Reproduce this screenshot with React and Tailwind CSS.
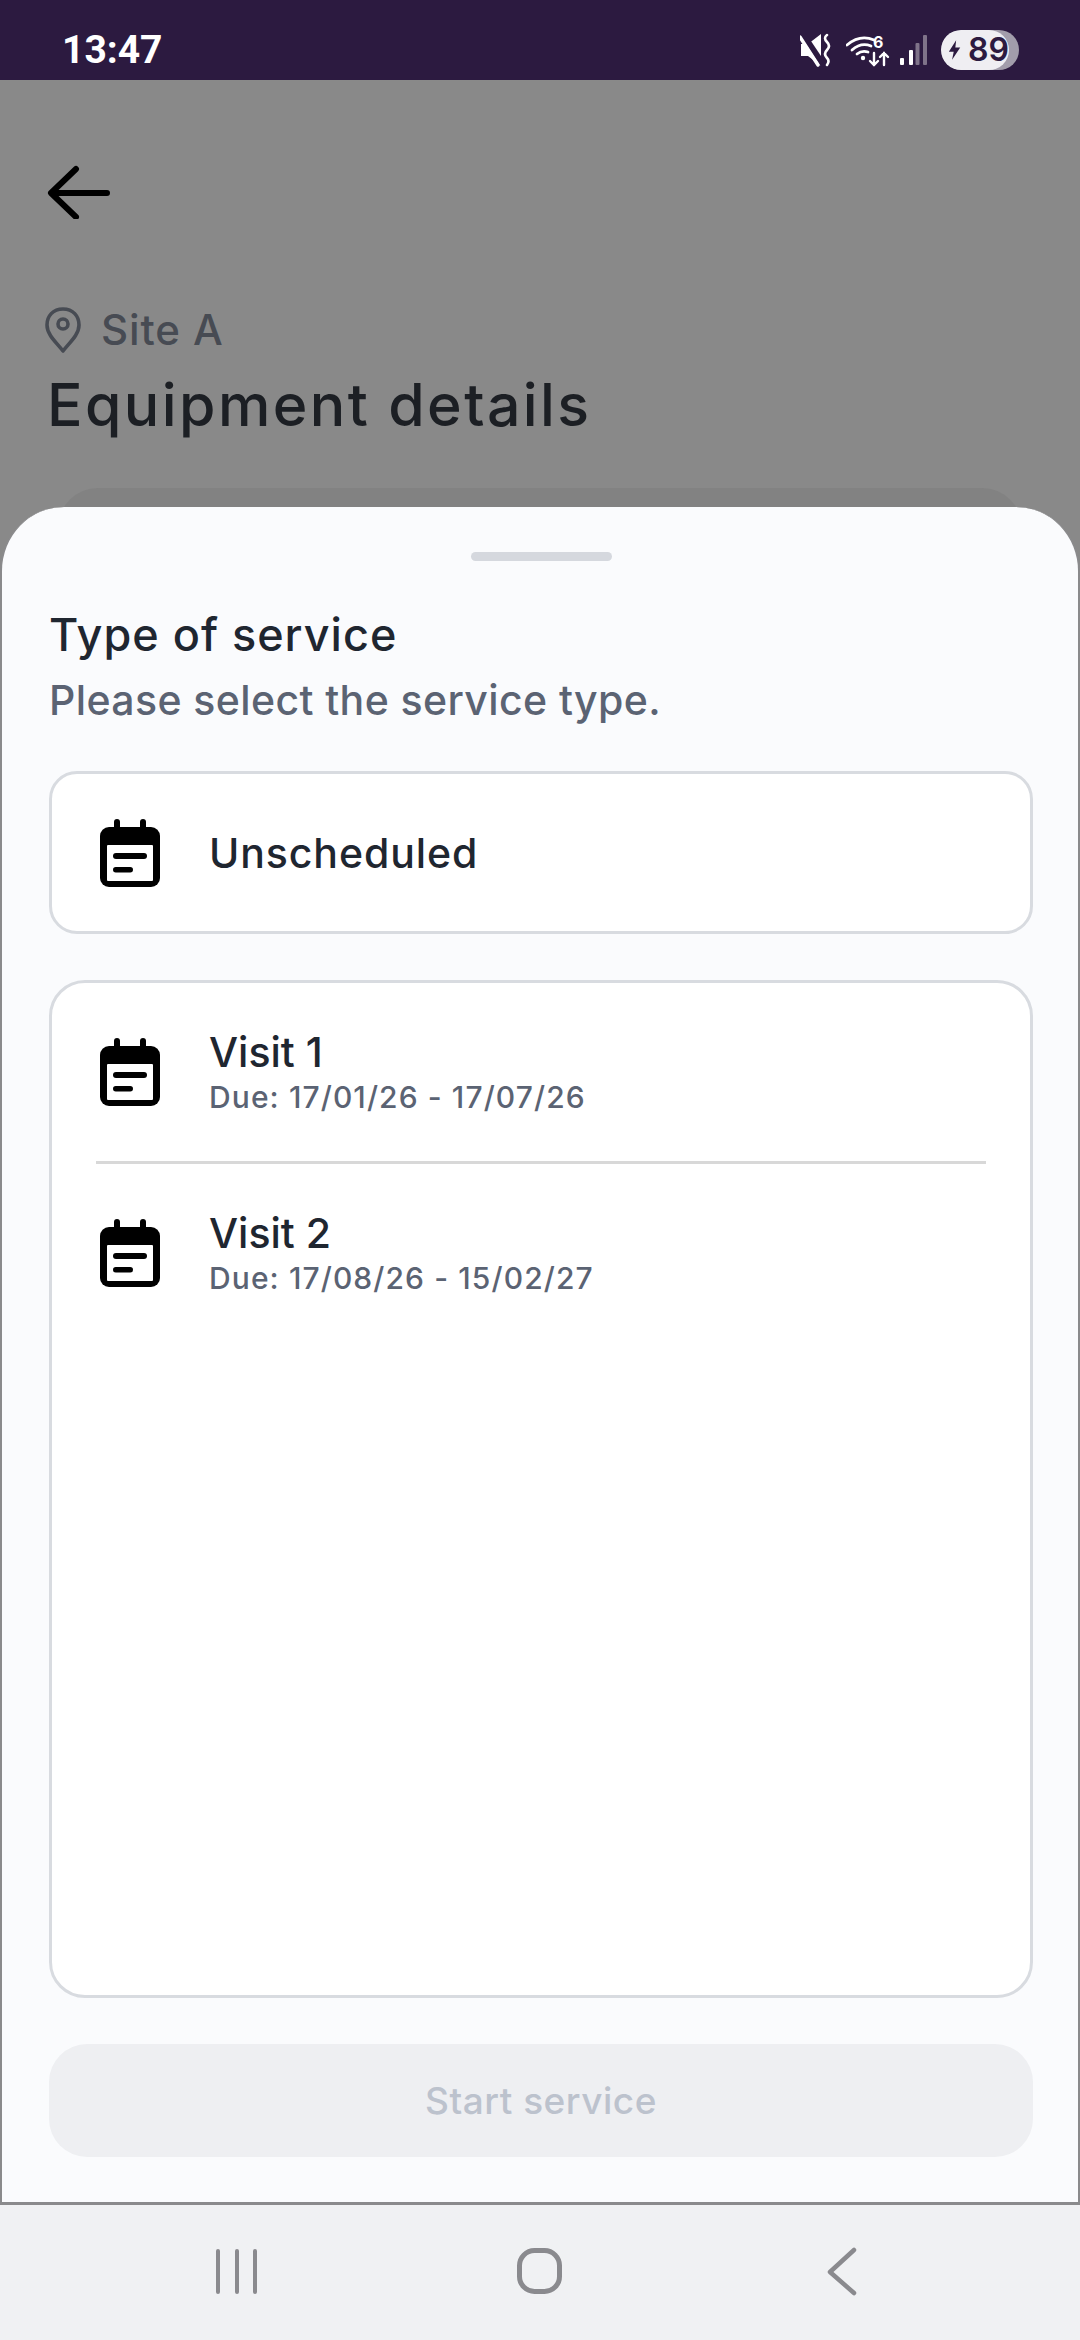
function CalendarIcon() {
  return (
    <svg width="60" height="68" viewBox="0 0 60 68" className="shrink-0">
      <rect x="0" y="8" width="60" height="60" rx="9" fill="#000" />
      <rect x="14" y="0" width="6" height="16" rx="3" fill="#000" />
      <rect x="40" y="0" width="6" height="16" rx="3" fill="#000" />
      <rect x="7" y="26" width="46" height="36" rx="1" fill="#fff" />
      <rect x="13" y="34" width="34" height="6" rx="3" fill="#000" />
      <rect x="13" y="48" width="20" height="5.5" rx="2.75" fill="#000" />
    </svg>
  );
}

function StatusIcons() {
  return (
    <div className="flex items-center">
      <svg width="32" height="34" viewBox="0 0 32 34" className="mr-[14px]">
        <path d="M1 11 H8 L21 1 V33 L8 23 H1 Z" fill="#fff" />
        <path d="M2 0 L24 33" stroke="#2c1a40" strokeWidth="6" />
        <path d="M0 4 L18 32" stroke="#fff" strokeWidth="3.4" strokeLinecap="round" />
        <path d="M27 2 Q23 5 27 9 Q31 13 27 17 Q23 21 27 25 Q30 28 27 32" stroke="#fff" strokeWidth="2.6" fill="none" strokeLinecap="round" />
      </svg>
      <svg width="46" height="34" viewBox="0 0 46 34" className="mr-[8px]">
        <path d="M1 12 Q14 1 28 7" stroke="#fff" strokeWidth="2.8" fill="none" strokeLinecap="round" />
        <path d="M6 17 Q15 9 25 13" stroke="#fff" strokeWidth="2.8" fill="none" strokeLinecap="round" />
        <path d="M11 21 Q16 17 22 19" stroke="#fff" strokeWidth="2.8" fill="none" strokeLinecap="round" />
        <circle cx="17" cy="25" r="2.2" fill="#fff" />
        <text x="27" y="15" fill="#fff" fontSize="16" fontWeight="700" fontFamily="Inter, sans-serif">6</text>
        <path d="M28 20 V32 M24 28 L28 32 L32 28" stroke="#fff" strokeWidth="2.4" fill="none" strokeLinecap="round" />
        <path d="M38 32 V20 M34 24 L38 20 L42 24" stroke="#fff" strokeWidth="2.4" fill="none" strokeLinecap="round" />
      </svg>
      <svg width="28" height="30" viewBox="0 0 28 30" className="mr-[13px]">
        <rect x="0" y="23" width="4" height="7" rx="1" fill="#fff" />
        <rect x="9" y="15" width="4" height="15" rx="1" fill="#fff" />
        <rect x="15.5" y="8" width="4" height="22" rx="1" fill="#7f7389" />
        <rect x="23" y="0" width="4" height="30" rx="1" fill="#7f7389" />
      </svg>
      <div className="flex h-[40px] w-[78px] items-center overflow-hidden rounded-[20px] bg-[#a29dab]">
        <div className="flex h-full w-[68px] items-center rounded-[20px] bg-[#efeef2] pl-[7px]">
          <svg width="16" height="24" viewBox="0 0 16 24">
            <path d="M10 0 L1 14 H7 L5 24 L15 9 H9 Z" fill="#2c1a40" />
          </svg>
          <span className="ml-[7px] text-[32px] leading-none font-semibold text-[#2c1a40] font-['Inter',sans-serif]">89</span>
        </div>
      </div>
    </div>
  );
}

function Visit({ title, due }) {
  return (
    <div className="flex h-[178px] items-center pl-[48px]">
      <CalendarIcon />
      <div className="ml-[49px] flex flex-col">
        <span className="text-[41px] leading-[50px] font-[450] text-[#1f2630]">{title}</span>
        <span className="text-[30px] leading-[40px] font-[450] tracking-[1.1px] text-[#5b6373]">{due}</span>
      </div>
    </div>
  );
}

export default function App() {
  return (
    <div className="flex h-[2340px] w-[1080px] flex-col overflow-hidden bg-[#f0f1f3] font-['Inter','Noto_Sans',sans-serif]">
      <div className="flex h-[80px] shrink-0 items-center justify-between bg-[#2c1a40] pt-[20px] pr-[61px] pl-[62px]">
        <span className="text-[39px] leading-none font-bold text-white font-['Roboto',sans-serif]">13:47</span>
        <StatusIcons />
      </div>

      <div className="relative h-[2125px] shrink-0 bg-[#898989]">
        <div className="flex flex-col px-[47px] pt-[85px]">
          <svg width="64" height="54" viewBox="0 0 64 54">
            <path d="M60 28 H5 M29 4 L4 28 L29 52" stroke="#000" strokeWidth="6" fill="none" strokeLinecap="round" strokeLinejoin="round" />
          </svg>
          <div className="mt-[88px] -ml-[2px] flex items-center">
            <svg width="36" height="46" viewBox="0 0 36 46">
              <path d="M18 2 C8 2 2 9 2 18 C2 28 12 36 18 44 C24 36 34 28 34 18 C34 9 28 2 18 2 Z" fill="none" stroke="#474b53" strokeWidth="3.6" strokeLinejoin="round" />
              <circle cx="18" cy="17" r="5" fill="none" stroke="#474b53" strokeWidth="3.6" />
            </svg>
            <span className="ml-[20px] text-[42px] leading-[46px] font-medium tracking-[0.9px] text-[#474b53]">Site A</span>
          </div>
          <h1 className="mt-[18px] text-[59px] leading-[68px] font-medium tracking-[2.4px] text-[#1c1f24]">Equipment details</h1>
          <div className="mx-[11px] mt-[49px] h-[40px] rounded-t-[44px] bg-[#828282]" />
        </div>

        <div className="absolute inset-x-0 bottom-0 flex h-[1698px] flex-col rounded-t-[64px] border-x-[2px] border-b-[3px] border-[#8a8a8c] bg-[#fafbfd] pt-[45px] pr-[45px] pl-[47px]">
          <div className="mx-auto h-[9px] w-[141px] rounded-[5px] bg-[#d5d8de]" />
          <h2 className="mt-[46px] text-[45px] leading-[56px] font-[450] tracking-[1px] text-[#1f2630]">Type of service</h2>
          <p className="mt-[12px] text-[41px] leading-[50px] font-[450] tracking-[0.4px] text-[#5b6373]">Please select the service type.</p>

          <div className="mt-[46px] flex h-[163px] items-center rounded-[28px] border-[3px] border-[#d8dbe0] bg-white pl-[48px]">
            <CalendarIcon />
            <span className="ml-[49px] text-[41px] leading-[50px] font-[450] tracking-[0.9px] text-[#1f2630]">Unscheduled</span>
          </div>

          <div className="mt-[46px] flex h-[1018px] flex-col rounded-[36px] border-[3px] border-[#d8dbe0] bg-white">
            <Visit title="Visit 1" due="Due: 17/01/26 - 17/07/26" />
            <div className="mx-[44px] h-[3px] bg-[#d8d8d8]" />
            <Visit title="Visit 2" due="Due: 17/08/26 - 15/02/27" />
          </div>

          <button className="mt-[46px] flex h-[113px] items-center justify-center rounded-[38px] bg-[#eeeff2] text-[37px] font-medium tracking-[0.5px] text-[#bcc2cd]">
            Start service
          </button>
        </div>
      </div>

      <div className="flex-1">
        <svg width="1080" height="135" viewBox="0 0 1080 135">
          <path d="M218 46 V87 M237 46 V87 M255 46 V87" stroke="#8a8a8e" strokeWidth="4" strokeLinecap="round" />
          <rect x="519.5" y="45.5" width="40" height="41" rx="15" fill="none" stroke="#8a8a8e" strokeWidth="5" />
          <path d="M854 45 L830 67 L854 88" stroke="#8a8a8e" strokeWidth="4.5" fill="none" strokeLinecap="round" strokeLinejoin="round" />
        </svg>
      </div>
    </div>
  );
}
